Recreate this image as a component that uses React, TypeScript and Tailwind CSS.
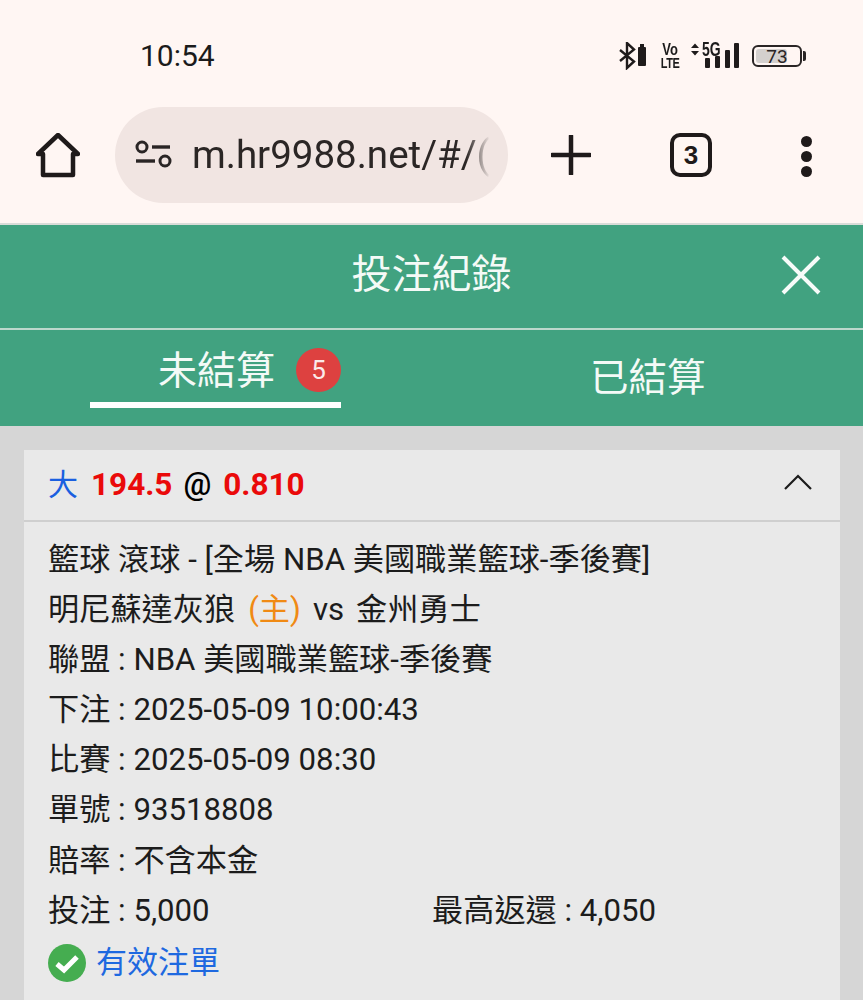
import React from "react";

const CJK = "font-['Roboto','Noto_Sans_CJK_TC',sans-serif]";

function Line({ children }: { children: React.ReactNode }) {
  return <div className="h-[50px] leading-[50px] whitespace-nowrap">{children}</div>;
}

function StatusIcons() {
  return (
    <div className="flex items-center mr-[57px] text-[#1c1b1b]">
      <svg width="30" height="28" viewBox="0 0 30 28" fill="none" className="mr-[12px]">
        <path d="M2 8 L16 19.5 L9 26 V1 L16 7.5 L2 19" stroke="#1f1b1b" strokeWidth="2.4" />
        <rect x="22" y="2" width="4" height="3" fill="#1f1b1b" />
        <rect x="20" y="5" width="8" height="19" rx="1" fill="#1f1b1b" />
      </svg>
      <div className="w-[20px] mr-[10px] font-['Liberation_Sans',sans-serif] font-bold flex flex-col items-center">
        <span className="text-[13px] leading-[12px] scale-y-[1.3]">Vo</span>
        <span className="text-[11px] leading-[12px] tracking-[-0.5px] scale-y-[1.4]">LTE</span>
      </div>
      <div className="relative w-[50px] h-[26px] mr-[12px]">
        <svg width="50" height="26" viewBox="0 0 50 26" className="absolute left-0 top-0">
          <path d="M1 5 L5 0.5 L9 5 Z M1 8 L5 12.5 L9 8 Z" fill="#1f1b1b" />
          <rect x="15" y="15" width="5" height="10" rx="1" fill="#1f1b1b" />
          <rect x="25" y="13" width="5" height="12" rx="1" fill="#1f1b1b" />
          <rect x="35" y="7" width="5" height="18" rx="1" fill="#1f1b1b" />
          <rect x="44" y="0" width="5" height="25" rx="1" fill="#1f1b1b" />
        </svg>
        <span className="absolute left-[12px] top-[-4px] text-[14px] font-bold leading-[15px] origin-top scale-y-[1.4] font-['Liberation_Sans',sans-serif]">5G</span>
      </div>
      <div className="relative w-[50px] h-[22px] rounded-[6px] border-2 border-[#2a2525] p-[2px] flex">
        <div className="w-[73%] bg-[#d4d0ce] rounded-[3px]" />
        <span className="absolute inset-0 flex items-center justify-center text-[19px] leading-none text-[#2a2525] font-['Roboto',sans-serif]">73</span>
      </div>
      <div className="w-[3px] h-[10px] bg-[#2a2525] rounded-r-[2px] ml-[1px]" />
    </div>
  );
}

export default function App() {
  return (
    <div className={`w-[863px] h-[1000px] overflow-hidden bg-[#d6d6d6] ${CJK}`}>
      {/* Status bar */}
      <div className="h-[107px] bg-[#fff6f3] flex items-start justify-between">
        <span className="ml-[140px] mt-[39px] text-[30px] leading-[33px] text-[#1b1b1b]">10:54</span>
        <div className="mt-[42px]"><StatusIcons /></div>
      </div>

      {/* Browser bar */}
      <div className="h-[116px] bg-[#fff6f3] flex items-start">
        <svg width="44" height="46" viewBox="0 0 44 46" fill="none" className="ml-[36px] mt-[26px]">
          <path d="M7 42 V21 H2 L22 2 L42 21 H37 V42 Z" stroke="#1f1a1a" strokeWidth="4.5" strokeLinejoin="round" />
        </svg>
        <div className="ml-[35px] w-[393px] h-[96px] rounded-[48px] bg-[#f1e5e2] flex items-center pl-[20px]">
          <svg width="38" height="30" viewBox="0 0 38 30" fill="none">
            <circle cx="7" cy="7" r="5" stroke="#2a2525" strokeWidth="3" />
            <path d="M17 7 H35" stroke="#2a2525" strokeWidth="3.4" />
            <path d="M1 21 H20" stroke="#2a2525" strokeWidth="3.4" />
            <circle cx="30" cy="21" r="5" stroke="#2a2525" strokeWidth="3" />
          </svg>
          <div className="ml-[19px] w-[298px] overflow-hidden whitespace-nowrap text-[38.5px] leading-[96px] text-[#2b2625] [mask-image:linear-gradient(90deg,#000_92%,transparent)]">
            m.hr9988.net/#/(
          </div>
        </div>
        <svg width="40" height="40" viewBox="0 0 40 40" className="ml-[43px] mt-[28px]">
          <path d="M20 1 V39 M1 20 H39" stroke="#1f1a1a" strokeWidth="4.5" strokeLinecap="round" />
        </svg>
        <div className="ml-[79px] mt-[26px] w-[42px] h-[44px] rounded-[10px] border-[4.5px] border-[#1f1a1a] flex items-center justify-center text-[26px] font-bold text-[#1f1a1a] font-['Liberation_Sans',sans-serif]">3</div>
        <div className="ml-[89px] mt-[29px] flex flex-col gap-[4px]">
          <span className="w-[11px] h-[11px] rounded-full bg-[#1f1a1a]" />
          <span className="w-[11px] h-[11px] rounded-full bg-[#1f1a1a]" />
          <span className="w-[11px] h-[11px] rounded-full bg-[#1f1a1a]" />
        </div>
      </div>

      {/* Header */}
      <div className="h-[2px] bg-[#d9dcd8]" />
      <div className="h-[103px] bg-[#41a280] flex items-center justify-center relative">
        <span className="text-[40px] leading-[50px] mb-[4px] text-[#f4faf7]">投注紀錄</span>
        <svg width="40" height="40" viewBox="0 0 40 40" className="absolute right-[42px] top-[30px]">
          <path d="M2 2 L38 38 M38 2 L2 38" stroke="#f7fbf9" strokeWidth="4" />
        </svg>
      </div>
      <div className="h-[2px] bg-[#bcd8cc]" />

      {/* Tabs */}
      <div className="h-[96px] bg-[#41a280] flex">
        <div className="ml-[90px] w-[251px] shrink-0 h-[78px] border-b-[6px] border-white flex items-start">
          <span className="ml-[68px] mt-[15px] text-[39px] leading-[52px] whitespace-nowrap text-[#f4faf7]">未結算</span>
          <span className="ml-[21px] mt-[18px] w-[45px] h-[44px] shrink-0 rounded-full bg-[#dd4140] text-[#fbeaea] text-[26px] flex items-center justify-center">5</span>
        </div>
        <span className="ml-[249px] mt-[22px] text-[38.5px] leading-[52px] whitespace-nowrap text-[#f4faf7]">已結算</span>
      </div>

      {/* Card */}
      <div className="ml-[24px] w-[816px] mt-[24px] h-[600px] bg-[#e9e9e9]">
        <div className="h-[72px] border-b-2 border-[#cfcfcf] pl-[24px] pr-[28px] flex items-center justify-between">
          <div className="text-[31.5px] leading-[68px] whitespace-nowrap flex items-center">
            <span className="text-[#1a5fe0] text-[30px]">大</span>
            <span className="ml-[13px] text-[#ea0a0a] font-bold">194.5</span>
            <span className="ml-[11px] text-black font-medium text-[31px]">@</span>
            <span className="ml-[12px] text-[#ea0a0a] font-bold">0.810</span>
          </div>
          <svg width="28" height="16" viewBox="0 0 28 16" fill="none" className="mb-[6px]">
            <path d="M1 15 L14 2 L27 15" stroke="#1c1c1c" strokeWidth="2.2" />
          </svg>
        </div>
        <div className="pl-[24px] pt-[13px] text-[31.2px] text-[#1c1c1c]">
          <Line>籃球 滾球 - [全場 NBA 美國職業籃球-季後賽]</Line>
          <Line>明尼蘇達灰狼<span className="ml-[13px] text-[#f08a14]">(主)</span><span className="ml-[12px]">vs</span><span className="ml-[12px]">金州勇士</span></Line>
          <Line>聯盟 : NBA 美國職業籃球-季後賽</Line>
          <Line>下注 : 2025-05-09 10:00:43</Line>
          <Line>比賽 : 2025-05-09 08:30</Line>
          <Line>單號 : 93518808</Line>
          <div className="h-[51px] leading-[52px] whitespace-nowrap">賠率 : 不含本金</div>
          <div className="h-[50px] leading-[50px] flex whitespace-nowrap">
            <span className="w-[384px]">投注 : 5,000</span>
            <span>最高返還 : 4,050</span>
          </div>
          <div className="h-[54px] flex items-center">
            <svg width="40" height="40" viewBox="0 0 40 40" className="-ml-[1px]">
              <circle cx="20" cy="20" r="19" fill="#45ad50" />
              <path d="M10 21 L17 27 L30 14" stroke="#fff" strokeWidth="5" fill="none" />
            </svg>
            <span className="ml-[9px] text-[#1e69e0] text-[31px]">有效注單</span>
          </div>
        </div>
      </div>
    </div>
  );
}
